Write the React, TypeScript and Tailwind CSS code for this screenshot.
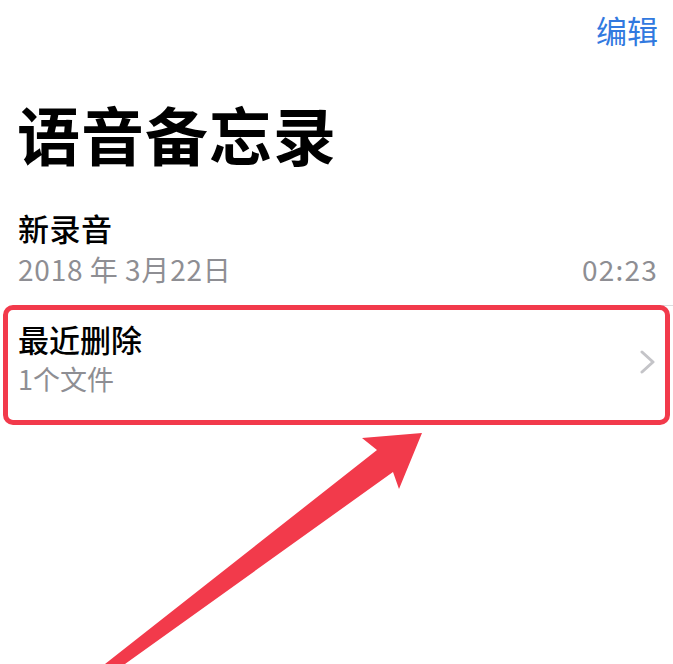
const font = { fontFamily: '"Noto Sans CJK SC", "Noto Sans", sans-serif' };

export default function App() {
  return (
    <div className="relative w-[673px] h-[664px] overflow-hidden bg-white" style={font}>
      {/* Nav bar */}
      <div className="flex justify-end h-[64px] pt-[10px] pr-[15px]">
        <span className="text-[31px] leading-[40px] text-[#3179df]">编辑</span>
      </div>

      {/* Large title */}
      <h1 className="h-[130px] pl-[17px] pt-[33px] text-[63px] leading-[72px] font-bold text-black tracking-[1px]">
        语音备忘录
      </h1>

      {/* Recording row */}
      <div className="ml-[18px] h-[112px] pr-[15px] border-b border-[#dcdcdf] pt-[12px]">
        <div className="text-[31px] leading-[44px] font-medium text-black tracking-[0.5px]">新录音</div>
        <div className="flex justify-between text-[28px] leading-[38px] text-[#8e8e93]">
          <span className="tracking-[0.8px]">2018{'\u2009'}年{'\u2009'}3月22日</span>
          <span className="tracking-[1.2px]">02:23</span>
        </div>
      </div>

      {/* Recently deleted row, highlighted */}
      <div className="mx-[3px] mt-[-1px] h-[120px] border-[5px] border-[#f23a4b] rounded-[10px] flex items-start justify-between pl-[10px] pr-[9px] pt-[7px]">
        <div className="flex flex-col">
          <span className="text-[31px] leading-[44px] font-medium text-black">最近删除</span>
          <span className="text-[27px] leading-[36px] text-[#8e8e93]">1个文件</span>
        </div>
        <svg className="mt-[33px]" width="16" height="24" viewBox="0 0 16 24" fill="none">
          <polyline points="2,2 13,12 2,22" stroke="#c4c4c8" strokeWidth="3" strokeLinecap="round" strokeLinejoin="round" />
        </svg>
      </div>

      {/* Annotation arrow */}
      <svg className="absolute inset-0 pointer-events-none" width="673" height="664" viewBox="0 0 673 664">
        <polygon
          points="422,433 399,489 393,472 125,664 105,664 377,450 362,438"
          fill="#f23a4b"
        />
      </svg>
    </div>
  );
}
